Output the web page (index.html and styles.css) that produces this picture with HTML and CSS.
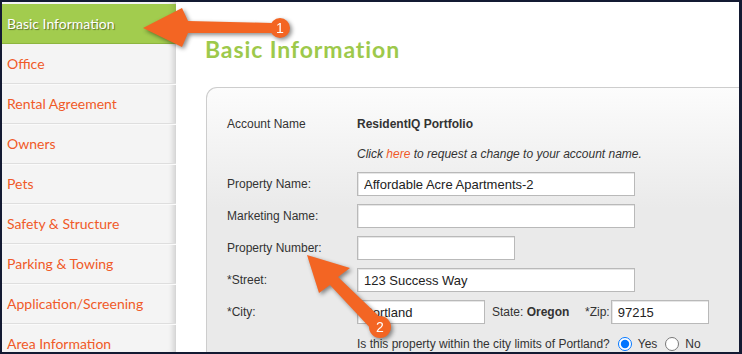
FILE: index.html
```html
<!DOCTYPE html>
<html>
<head>
<meta charset="utf-8">
<link rel="stylesheet" href="styles.css">
</head>
<body>
<div class="frame">
  <nav class="sidebar">
    <a class="item active">Basic Information</a>
    <a class="item">Office</a>
    <a class="item">Rental Agreement</a>
    <a class="item">Owners</a>
    <a class="item">Pets</a>
    <a class="item">Safety &amp; Structure</a>
    <a class="item">Parking &amp; Towing</a>
    <a class="item">Application/Screening</a>
    <a class="item">Area Information</a>
  </nav>
  <main class="content">
    <h1 class="title">Basic Information</h1>
    <div class="panel">
      <div class="row r30"><span class="label">Account Name</span><span class="value strong">ResidentIQ Portfolio</span></div>
      <div class="row r29"><span class="label"></span><span class="value note">Click <a class="link">here</a> to request a change to your account name.</span></div>
      <div class="row"><span class="label">Property Name:</span><input class="field wide" value="Affordable Acre Apartments-2"></div>
      <div class="row"><span class="label">Marketing Name:</span><input class="field wide" value=""></div>
      <div class="row"><span class="label">Property Number:</span><input class="field num" value=""></div>
      <div class="row"><span class="label">*Street:</span><input class="field wide" value="123 Success Way"></div>
      <div class="row"><span class="label">*City:</span><input class="field city" value="Portland"><span class="state">State: <b>Oregon</b></span><span class="zip">*Zip:</span><input class="field zipf" value="97215"></div>
      <div class="row"><span class="label"></span><span class="value">Is this property within the city limits of Portland?</span><label class="radio"><input type="radio" name="pdx" checked>Yes</label><label class="radio"><input type="radio" name="pdx">No</label></div>
    </div>
  </main>
</div>
<svg class="annot" width="742" height="354" viewBox="0 0 742 354">
  <g class="arrow">
    <polygon points="143,28 182,8 188,21 272,23 272,33 188,33 182,47"/>
    <circle cx="280" cy="28" r="10"/>
    <text x="280" y="33">1</text>
  </g>
  <g class="arrow">
    <polygon points="307,255 350,268 338,277 384,321 373,331 330,285 319,293"/>
    <circle cx="380" cy="327" r="11"/>
    <text x="380" y="332">2</text>
  </g>
</svg>
</body>
</html>
```
FILE: styles.css
```css
html, body { margin: 0; padding: 0; }
body {
  background: #131a32;
  width: 742px;
  height: 354px;
  overflow: hidden;
  position: relative;
}
.frame {
  margin: 2px 3px 2px 2px;
  width: 737px;
  height: 350px;
  overflow: hidden;
  display: flex;
  background: #fff;
}
.sidebar {
  width: 174px;
  flex: none;
  display: flex;
  flex-direction: column;
  background: #f4f4f4;
  box-shadow: inset -7px 0 6px -5px rgba(0,0,0,0.18);
}
.item {
  height: 39px;
  flex: none;
  display: flex;
  align-items: center;
  padding-left: 5px;
  font-family: Lato, "Liberation Sans", sans-serif;
  font-size: 14px;
  color: #f05a28;
  border-bottom: 1px solid #dedede;
  box-shadow: 0 1px 0 #fafafa;
}
.item.active {
  background: #a2cc4e;
  color: #fff;
  height: 39px;
  margin-top: 2px;
  border-bottom: 1px solid #8db53f;
  text-shadow: 1px 1px 1px rgba(0,0,0,0.45);
  box-shadow: inset -7px 0 6px -5px rgba(0,0,0,0.12);
}
.content {
  flex: 1;
  padding-left: 29px;
  font-family: "Liberation Sans", Arial, sans-serif;
  font-size: 12px;
  color: #333;
}
.title {
  margin: 34px 0 0 0;
  font-family: Lato, "Liberation Sans", sans-serif;
  font-size: 23px;
  letter-spacing: 0.9px;
  line-height: 26px;
  font-weight: bold;
  color: #9dc94b;
}
.panel {
  margin: 25px 0 0 1px;
  padding: 21px 0 0 20px;
  border: 1px solid #cdcdcd;
  border-right: none;
  border-bottom: none;
  border-top-left-radius: 11px;
  background: linear-gradient(#fcfcfc 0px, #eaeaea 120px, #eaeaea);
  height: 300px;
}
.row {
  display: flex;
  align-items: center;
  height: 32px;
}
.row.r30 { height: 30px; }
.row.r29 { height: 29px; }
.label { width: 130px; flex: none; }
.strong { font-weight: bold; }
.note { font-style: italic; }
.link { color: #f05a28; }
.field {
  box-sizing: border-box;
  height: 24px;
  border: 1px solid #b9b9b9;
  box-shadow: inset 1px 1px 0 #e6e6e6;
  background: #fff;
  padding: 0 6px;
  margin: 0;
  font-family: "Liberation Sans", Arial, sans-serif;
  font-size: 13px;
  color: #222;
  outline: none;
}
.wide { width: 278px; }
.num { width: 158px; }
.city { width: 128px; }
.zipf { width: 98px; }
.state { margin-left: 7px; width: 93px; }
.zip { margin-right: 1px; }
.radio { display: flex; align-items: center; margin-left: 3px; }
.radio input {
  width: 14px;
  height: 14px;
  margin: 0 6px 0 5px;
  accent-color: #0075ff;
}
.annot {
  position: absolute;
  left: 0;
  top: 0;
}
.arrow {
  fill: #f36523;
  filter: drop-shadow(2px 2px 2px rgba(0,0,0,0.45));
}
.arrow text {
  fill: #fff;
  font-family: "Liberation Sans", Arial, sans-serif;
  font-size: 14px;
  text-anchor: middle;
}
```
